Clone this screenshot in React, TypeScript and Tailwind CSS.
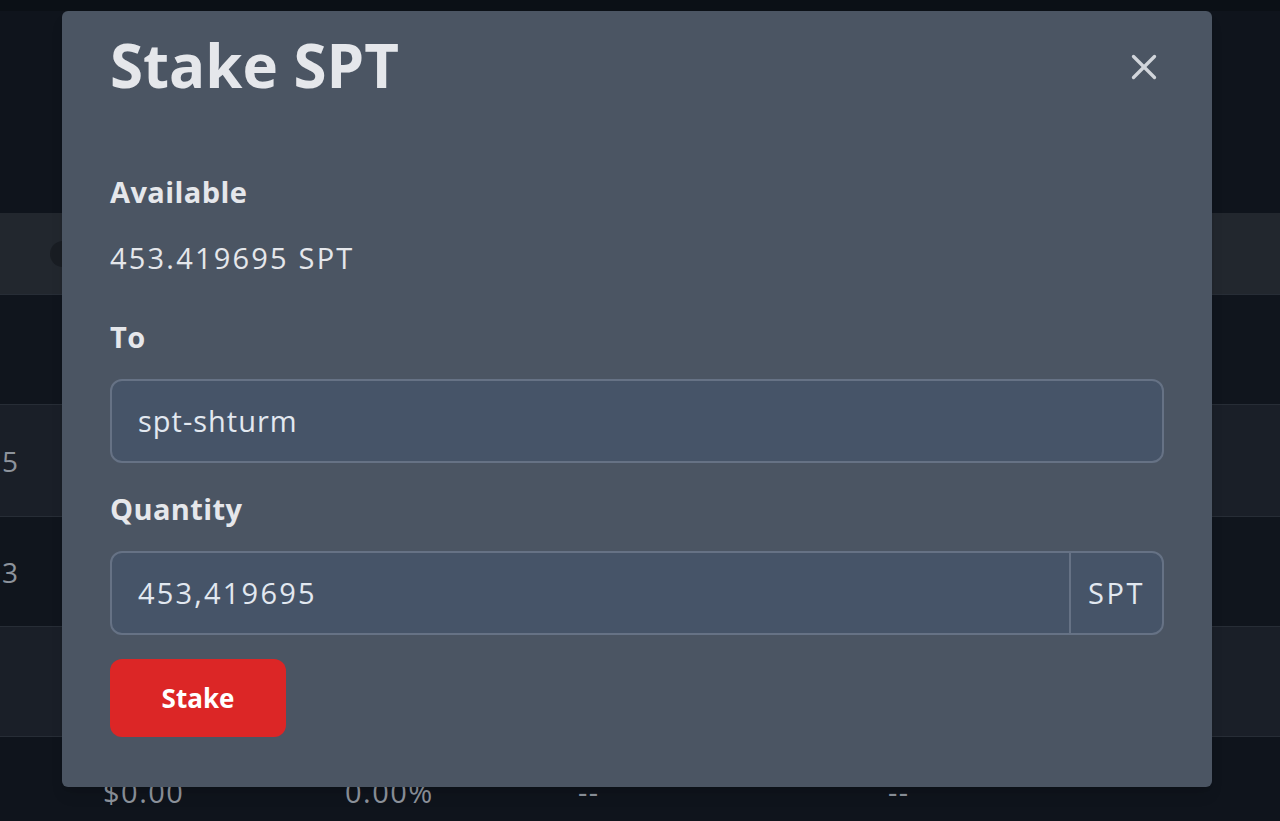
import { X } from 'lucide-react';

const rows = [
  { bg: 'bg-[#22272e]', h: 'h-[82px]', cell: '', icon: true },
  { bg: 'bg-[#10151d]', h: 'h-[110px]', cell: '', icon: false },
  { bg: 'bg-[#1a1f28]', h: 'h-[112px]', cell: '5', icon: false },
  { bg: 'bg-[#10151d]', h: 'h-[110px]', cell: '3', icon: false },
  { bg: 'bg-[#1a1f28]', h: 'h-[110px]', cell: '', icon: false },
];

export default function App() {
  return (
    <div className="relative h-[821px] w-[1280px] overflow-hidden bg-[#0f141c] font-['Open_Sans',sans-serif]">
      {/* page behind the overlay */}
      <div className="h-[11px] bg-[#0b1016]" />
      <div className="h-[202px]" />
      {rows.map((r, i) => (
        <div key={i} className={`${r.bg} ${r.h} flex items-center border-b border-[#272d36]`}>
          {r.cell && <span className="ml-[2px] text-[28px] text-[#8d939c]">{r.cell}</span>}
          {r.icon && <span className="ml-[50px] h-[26px] w-[26px] rounded-full bg-[#191d23]" />}
        </div>
      ))}
      <div className="flex h-[84px] items-start pt-[38px] text-[29px] leading-[34px] tracking-[1.5px] text-[#8d939c]">
        <span className="ml-[103px] w-[242px]">$0.00</span>
        <span className="w-[233px]">0.00%</span>
        <span className="w-[310px]">--</span>
        <span>--</span>
      </div>

      {/* modal */}
      <div className="absolute left-[62px] top-[11px] flex h-[776px] w-[1150px] flex-col rounded-md bg-[#4b5563] px-[48px] shadow-lg">
        <div className="flex items-start justify-between pt-[22px]">
          <h2 className="text-[60px] font-bold leading-[64px] text-[#e5e7eb]">Stake SPT</h2>
          <button className="mr-[-1px] mt-[13px] text-[#d1d5db]">
            <X size={42} strokeWidth={1.9} />
          </button>
        </div>

        <div className="mt-[78px] text-[29px] font-bold leading-[34px] tracking-[0.4px] text-[#e5e7eb]">Available</div>
        <div className="mt-[32px] text-[29px] leading-[34px] tracking-[2.2px] text-[#e5e7eb]">453.419695 SPT</div>

        <div className="mt-[45px] text-[29px] font-bold leading-[34px] tracking-[0.4px] text-[#e5e7eb]">To</div>
        <div className="mt-[25px] flex h-[84px] items-center rounded-xl border-2 border-[#667285] bg-[#465468] px-[26px] text-[29px] tracking-[1px] text-[#e2e8f0]">
          spt-shturm
        </div>

        <div className="mt-[29px] text-[29px] font-bold leading-[34px] tracking-[0.4px] text-[#e5e7eb]">Quantity</div>
        <div className="mt-[25px] flex h-[84px] rounded-xl border-2 border-[#667285] bg-[#465468] text-[29px] text-[#e2e8f0]">
          <div className="flex flex-1 items-center px-[26px] tracking-[2.2px]">453,419695</div>
          <div className="flex w-[93px] items-center justify-center border-l-2 border-[#667285] tracking-[2.5px]">SPT</div>
        </div>

        <button className="mt-[24px] flex h-[78px] w-[176px] items-center justify-center rounded-xl bg-[#dc2626] text-[26px] font-bold text-white">
          Stake
        </button>
      </div>
    </div>
  );
}
